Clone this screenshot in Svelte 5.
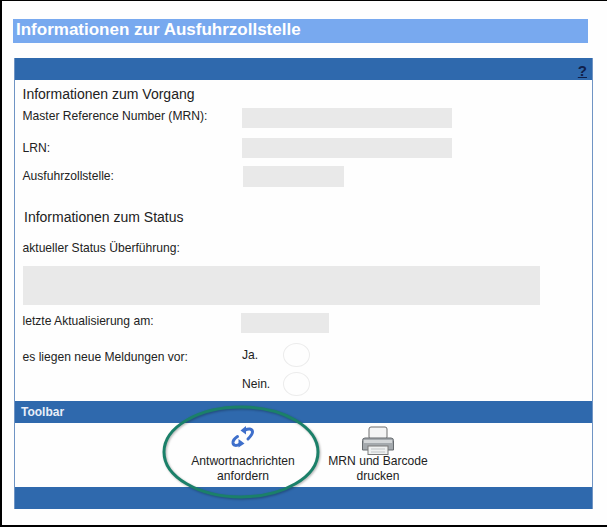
<script>
  const infoRows = [
    { label: "Master Reference Number (MRN):", cls: "wide" },
    { label: "LRN:", cls: "wide" },
    { label: "Ausfuhrzollstelle:", cls: "short" },
  ];
</script>

<div class="page">
  <div class="title">Informationen zur Ausfuhrzollstelle</div>

  <section class="panel">
    <div class="head"><span class="help">?</span></div>

    <div class="content">
      <h3 class="first">Informationen zum Vorgang</h3>
      {#each infoRows as row}
        <div class="row {row.cls}">
          <span class="label">{row.label}</span>
          <div class="field"></div>
        </div>
      {/each}

      <h3 class="second">Informationen zum Status</h3>
      <div class="label status">aktueller Status Überführung:</div>
      <div class="statusbox"></div>

      <div class="row updated">
        <span class="label">letzte Aktualisierung am:</span>
        <div class="field"></div>
      </div>

      <div class="news">
        <span class="label newslabel">es liegen neue Meldungen vor:</span>
        <div class="options">
          <div class="option"><span class="label">Ja.</span><span class="radio"></span></div>
          <div class="option"><span class="label">Nein.</span><span class="radio"></span></div>
        </div>
      </div>
    </div>

    <div class="toolhead">Toolbar</div>
    <div class="toolbar">
      <div class="tool one">
        <svg width="24" height="22" viewBox="0 0 24 22">
          <g fill="none" stroke="#3e6fcb" stroke-width="3" stroke-linecap="round">
            <path d="M14 4c3.500-1.500 7-1.500 7.500 1.500.3 2.500-2 5-4.500 7.500" />
            <path d="M9 18c-3.500 2-6.500 2-7-1-.3-2.500 1.500-4.500 4.500-6.500" />
          </g>
          <path d="M9.500 4.500l5.500-4.500v8.500z" fill="#3e6fcb" />
          <path d="M13.500 17.500l-6-4.500v8.500z" fill="#3e6fcb" />
        </svg>
        <span>Antwortnachrichten<br />anfordern</span>
      </div>
      <div class="tool two">
        <svg width="32" height="29" viewBox="0 0 32 29">
          <rect x="7" y="1" width="18" height="12" rx="2" fill="#f4f4f4" stroke="#6f6f6f" />
          <path d="M3 12h26a2.500 2.500 0 0 1 2.500 2.500V24H.5v-9.500A2.500 2.500 0 0 1 3 12z" fill="#a4a9ad" stroke="#666b6f" />
          <rect x="2" y="14" width="28" height="3" fill="#d3d6d8" />
          <rect x="6" y="20" width="20" height="8.500" fill="#eef0f0" stroke="#7a7a7a" />
          <path d="M9 23h14M9 26h14" stroke="#c2c5c7" />
        </svg>
        <span>MRN und Barcode<br />drucken</span>
      </div>
    </div>
    <div class="foot"></div>

    <svg class="mark" width="170" height="106" viewBox="0 0 170 106">
      <ellipse cx="85" cy="53" rx="77" ry="45" fill="none" stroke="#1b8069" stroke-width="3" />
    </svg>
  </section>
</div>

<style>
  :global(body) {
    margin: 0;
    background: #fff;
  }
  .page {
    position: relative;
    box-sizing: border-box;
    width: 607px;
    height: 527px;
    padding: 18px 0 0 11px;
    background: #fefefe;
    border-top: 1px solid #000;
    border-left: 2px solid #000;
    border-bottom: 2px solid #000;
    font-family: "Liberation Sans", Arial, sans-serif;
    color: #222;
    overflow: hidden;
  }
  .title {
    box-sizing: border-box;
    width: 575px;
    height: 24px;
    padding-left: 3px;
    background: #78a9ef;
    color: #fff;
    font-size: 17px;
    font-weight: 700;
    line-height: 22px;
  }
  .panel {
    position: relative;
    box-sizing: border-box;
    width: 579px;
    margin: 15px 0 0 1px;
    border-left: 1px solid #6f94c4;
    border-right: 1px solid #6f94c4;
  }
  .head {
    display: flex;
    justify-content: flex-end;
    align-items: flex-end;
    height: 22px;
    padding-right: 5px;
    background: #2f69ad;
  }
  .help {
    color: #10204a;
    font-size: 15px;
    font-weight: 700;
    line-height: 19px;
    text-decoration: underline;
  }
  .content {
    height: 321px;
    padding-left: 7.500px;
  }
  h3 {
    margin: 0;
    font-size: 14px;
    font-weight: 400;
    line-height: 16px;
  }
  .first {
    padding-top: 6px;
  }
  .second {
    margin: 22px 0 0 1.500px;
  }
  .label {
    font-size: 12.100px;
    line-height: 14px;
  }
  .row {
    display: flex;
    align-items: flex-start;
  }
  .row .label {
    width: 219.500px;
    flex: none;
    margin-top: 1px;
  }
  .field {
    height: 20px;
    background: #e9e9e9;
  }
  .wide {
    height: 20px;
    margin-bottom: 10px;
    margin-top: 6px;
  }
  .wide + .wide {
    margin-top: 0;
    margin-bottom: 8px;
  }
  .wide + .wide .label {
    margin-top: 3px;
  }
  .wide .field {
    width: 210px;
  }
  .short {
    height: 21px;
  }
  .row.short .label {
    margin-top: 3px;
  }
  .short .field {
    width: 101px;
    height: 21px;
    margin-left: 1px;
  }
  .status {
    margin-top: 16px;
  }
  .statusbox {
    width: 517px;
    height: 39px;
    margin-top: 11px;
    background: #e9e9e9;
  }
  .updated {
    margin-top: 8px;
  }
  .updated .label {
    width: 218.500px;
  }
  .updated .field {
    width: 88px;
  }
  .news {
    display: flex;
    margin-top: 10px;
  }
  .newslabel {
    width: 219.500px;
    margin-top: 7px;
  }
  .options {
    display: flex;
    flex-direction: column;
    gap: 6px;
  }
  .option {
    display: flex;
    align-items: flex-start;
    height: 23px;
  }
  .option .label {
    width: 41px;
    margin-top: 5px;
  }
  .radio {
    width: 25px;
    height: 22px;
    border: 1px solid #ececec;
    border-radius: 50%;
  }
  .toolhead {
    height: 22px;
    padding-left: 6px;
    background: #2f69ad;
    color: #e8eef8;
    font-size: 12px;
    font-weight: 700;
    line-height: 23px;
  }
  .toolbar {
    display: flex;
    height: 64px;
    padding-left: 168px;
  }
  .tool {
    display: flex;
    flex-direction: column;
    align-items: center;
    width: 120px;
    font-size: 12.100px;
    line-height: 15px;
    text-align: center;
  }
  .tool.one svg {
    margin: 3px 0 6px;
  }
  .tool.two {
    margin-left: 15px;
  }
  .tool.two svg {
    margin: 3px 0 -1px;
  }
  .foot {
    height: 22px;
    background: #2f69ad;
  }
  .mark {
    position: absolute;
    left: 141px;
    top: 341px;
    filter: drop-shadow(1px 1px 1px rgba(0, 0, 0, 0.3));
  }
</style>
